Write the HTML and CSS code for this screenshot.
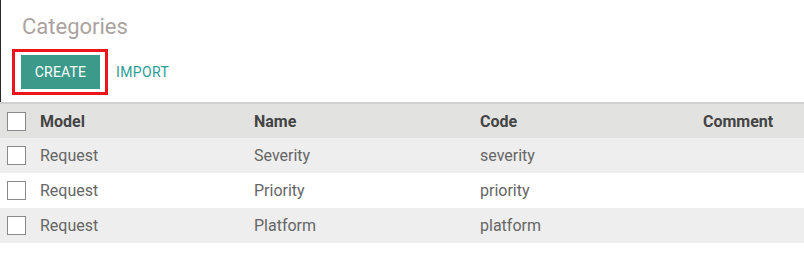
FILE: index.html
```html
<!DOCTYPE html>
<html>
<head>
<meta charset="utf-8">
<link rel="stylesheet" href="styles.css">
</head>
<body>
<div class="panel">
  <h1 class="title">Categories</h1>
  <div class="actions">
    <div class="highlight"><button class="btn-primary">CREATE</button></div>
    <button class="btn-link">IMPORT</button>
  </div>
</div>
<div class="list">
  <div class="row head">
    <span class="cb"></span><span>Model</span><span>Name</span><span>Code</span><span>Comment</span>
  </div>
  <div class="row stripe">
    <span class="cb"></span><span>Request</span><span>Severity</span><span>severity</span><span></span>
  </div>
  <div class="row">
    <span class="cb"></span><span>Request</span><span>Priority</span><span>priority</span><span></span>
  </div>
  <div class="row stripe">
    <span class="cb"></span><span>Request</span><span>Platform</span><span>platform</span><span></span>
  </div>
</div>
</body>
</html>
```
FILE: styles.css
```css
html, body {
  margin: 0;
  padding: 0;
  background: #fff;
  font-family: Roboto, "Liberation Sans", sans-serif;
}
.panel {
  height: 102px;
  box-sizing: border-box;
  border-left: 1px solid #2a2a2a;
  padding-top: 14px;
}
.title {
  margin: 0 0 9px 21px;
  font-size: 22px;
  line-height: 26px;
  font-weight: 400;
  color: #aaa3a1;
}
.actions {
  display: flex;
  align-items: center;
  padding-left: 11px;
}
.highlight {
  border: 3px solid #ee141c;
  padding: 3px 5px 3px 6px;
  display: flex;
}
.btn-primary {
  width: 79px;
  height: 34px;
  border: none;
  background: #3b9a89;
  color: #fff;
  font-family: Roboto, "Liberation Sans", sans-serif;
  font-size: 14px;
  letter-spacing: 0.2px;
  padding: 0;
  margin: 0;
}
.btn-link {
  margin-left: 8px;
  border: none;
  background: none;
  padding: 0;
  color: #2e9d96;
  font-family: Roboto, "Liberation Sans", sans-serif;
  font-size: 14px;
  letter-spacing: 0.4px;
}
.list {
  border-top: 2px solid #cfcfcf;
}
.row {
  display: grid;
  grid-template-columns: 40px 214px 226px 223px 1fr;
  align-items: center;
  height: 35px;
  font-size: 16px;
  color: #666;
  white-space: nowrap;
}
.row.head {
  height: 34px;
  background: #e2e2e0;
  color: #444;
  font-weight: 700;
}
.row.stripe {
  background: #edeeed;
}
.cb {
  width: 17px;
  height: 17px;
  margin-left: 7px;
  border: 1px solid #8a8a8a;
  background: #fff;
}
```
